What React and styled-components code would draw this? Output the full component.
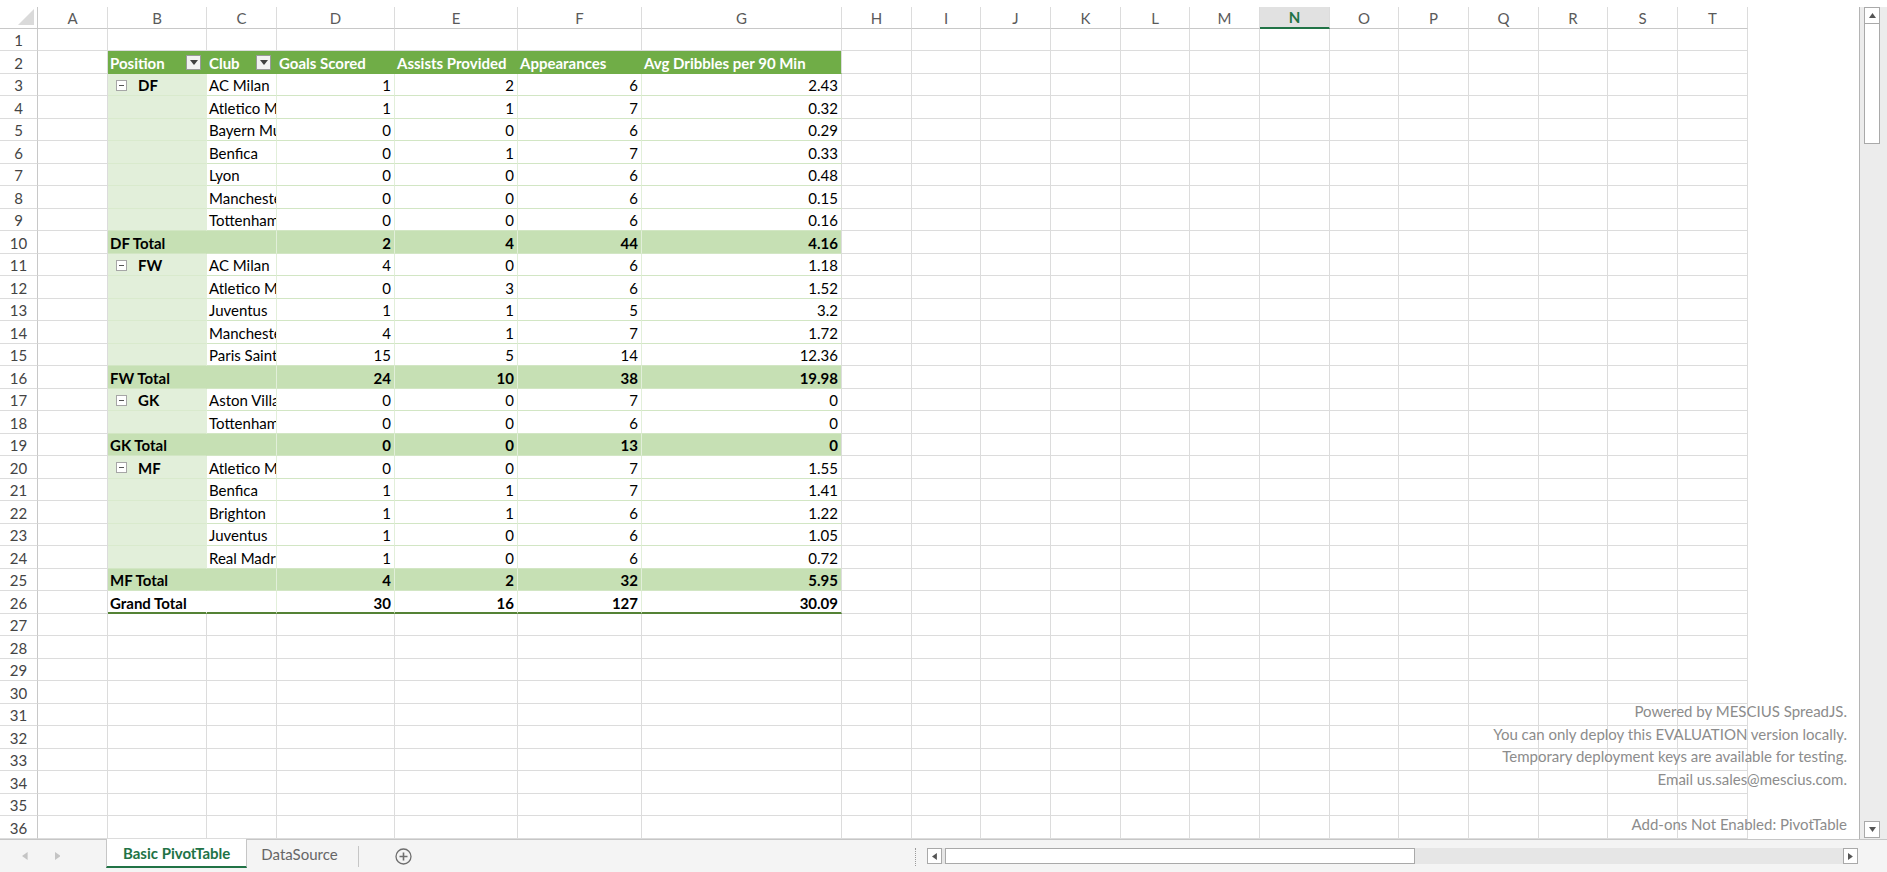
import React from 'react';
import styled, { createGlobalStyle, css } from 'styled-components';

const GlobalStyle = createGlobalStyle`
  html, body { margin: 0; padding: 0; background: #fff; }
  body { font-family: Lato, "Liberation Sans", sans-serif; }
  *, *::before, *::after { box-sizing: border-box; }
`;

const H_WIDTHS = [70, 69, 70, 70, 69, 70, 70, 69, 70, 70, 69, 70, 70];
const COLS = [38, 70, 99, 70, 118, 123, 124, 200, ...H_WIDTHS];
const TEMPLATE = COLS.map((w) => `${w}px`).join(' ') + ' 1fr';
const LETTERS = 'ABCDEFGHIJKLMNOPQRST'.split('');

const GRID = '#dcdcdc';
const HEAD_LINE = '#c8c8c8';
const PIVOT_H = '#d2e6c4';
const PIVOT_V = '#e2efda';

const groups = [
  {
    pos: 'DF',
    rows: [
      ['AC Milan', 1, 2, 6, '2.43'],
      ['Atletico Madrid', 1, 1, 7, '0.32'],
      ['Bayern Munich', 0, 0, 6, '0.29'],
      ['Benfica', 0, 1, 7, '0.33'],
      ['Lyon', 0, 0, 6, '0.48'],
      ['Manchester United', 0, 0, 6, '0.15'],
      ['Tottenham Hotspur', 0, 0, 6, '0.16'],
    ],
    total: [2, 4, 44, '4.16'],
  },
  {
    pos: 'FW',
    rows: [
      ['AC Milan', 4, 0, 6, '1.18'],
      ['Atletico Madrid', 0, 3, 6, '1.52'],
      ['Juventus', 1, 1, 5, '3.2'],
      ['Manchester City', 4, 1, 7, '1.72'],
      ['Paris Saint-Germain', 15, 5, 14, '12.36'],
    ],
    total: [24, 10, 38, '19.98'],
  },
  {
    pos: 'GK',
    rows: [
      ['Aston Villa', 0, 0, 7, '0'],
      ['Tottenham Hotspur', 0, 0, 6, '0'],
    ],
    total: [0, 0, 13, '0'],
  },
  {
    pos: 'MF',
    rows: [
      ['Atletico Madrid', 0, 0, 7, '1.55'],
      ['Benfica', 1, 1, 7, '1.41'],
      ['Brighton', 1, 1, 6, '1.22'],
      ['Juventus', 1, 0, 6, '1.05'],
      ['Real Madrid', 1, 0, 6, '0.72'],
    ],
    total: [4, 2, 32, '5.95'],
  },
];

function buildRows() {
  const rows = [{ type: 'empty' }, { type: 'head' }];
  groups.forEach((g) => {
    g.rows.forEach((r, i) => {
      rows.push({ type: 'data', label: i === 0 ? g.pos : '', last: i === g.rows.length - 1, club: r[0], values: r.slice(1) });
    });
    rows.push({ type: 'total', label: `${g.pos} Total`, values: g.total });
  });
  rows.push({ type: 'grand', label: 'Grand Total', values: [30, 16, 127, '30.09'] });
  while (rows.length < 36) rows.push({ type: 'empty' });
  return rows;
}

/* ---------- frame ---------- */
const Frame = styled.div`
  width: 1887px;
  height: 872px;
  display: flex;
  flex-direction: column;
  overflow: hidden;
  background: #fff;
`;
const TopGap = styled.div`
  height: 7px;
  flex: none;
`;
const Body = styled.div`
  display: flex;
  height: 832px;
  flex: none;
`;
const Viewport = styled.div`
  position: relative;
  flex: 1;
  border-right: 1px solid #b4b4b4;
  overflow: hidden;
`;

/* ---------- sheet rows ---------- */
const Row = styled.div`
  display: grid;
  grid-template-columns: ${TEMPLATE};
  height: ${(p) => p.$h}px;
  font-size: 15px;
  color: #000;
`;

const Cell = styled.div`
  display: flex;
  align-items: center;
  min-width: 0;
  overflow: hidden;
  white-space: nowrap;
  padding: 1px 3px 0 2px;
  border-right: 1px solid ${GRID};
  border-bottom: 1px solid ${GRID};
`;

const ColHead = styled(Cell)`
  justify-content: center;
  color: #5a5a5a;
  font-size: 15px;
  border-bottom: 1px solid ${HEAD_LINE};
  padding: 0;
  ${(p) =>
    p.$active &&
    css`
      background: #e1e1e1;
      color: #217346;
      font-weight: 700;
      border-bottom: 2px solid #217346;
    `}
`;

const Corner = styled(Cell)`
  position: relative;
  padding: 0;
  border-right: 1px solid ${HEAD_LINE};
  border-bottom: 1px solid ${HEAD_LINE};
  &::after {
    content: '';
    position: absolute;
    right: 3px;
    bottom: 3px;
    width: 0;
    height: 0;
    border-left: 16px solid transparent;
    border-bottom: 16px solid #dadada;
  }
`;

const RowNum = styled(Cell)`
  justify-content: center;
  color: #444;
  padding: 1px 0 0 0;
  border-right: 1px solid ${HEAD_LINE};
`;

const Fill = styled.div`
  background: #fff;
`;

const PivotHead = styled(Cell)`
  background: #70ad47;
  color: #fff;
  font-weight: 700;
  border-right: none;
  border-bottom: 1px solid #70ad47;
  justify-content: ${(p) => (p.$right ? 'flex-end' : 'flex-start')};
  ${(p) =>
    p.$last &&
    css`
      border-right: 1px solid ${GRID};
    `}
`;

const HeadLabel = styled.span`
  flex: 1;
  overflow: hidden;
`;

const FilterButton = styled.span`
  flex: none;
  width: 15px;
  height: 15px;
  margin-right: 3px;
  background: #f2f2f2;
  border: 1px solid #9a9a9a;
  display: flex;
  align-items: center;
  justify-content: center;
  &::after {
    content: '';
    border-left: 4px solid transparent;
    border-right: 4px solid transparent;
    border-top: 5px solid #404040;
  }
`;

const GroupCell = styled(Cell)`
  background: #e2efda;
  font-weight: 700;
  border-right: 1px solid #e2efda;
  border-bottom: 1px solid ${(p) => (p.$last ? PIVOT_H : '#d9eacd')};
  padding-left: 8px;
  gap: 11px;
`;

const Toggle = styled.span`
  flex: none;
  width: 11px;
  height: 11px;
  border: 1px solid #a6a6a6;
  background: #fff;
  display: flex;
  align-items: center;
  justify-content: center;
  &::after {
    content: '';
    width: 5px;
    height: 1px;
    background: #555;
  }
`;

const ClubCell = styled(Cell)`
  border-right: 1px solid ${PIVOT_V};
  border-bottom: 1px solid ${PIVOT_H};
`;

const ValueCell = styled(Cell)`
  justify-content: flex-end;
  border-right: 1px solid ${(p) => (p.$last ? GRID : PIVOT_V)};
  border-bottom: 1px solid ${PIVOT_H};
`;

const TotalCell = styled(Cell)`
  background: #c6e0b4;
  font-weight: 700;
  overflow: ${(p) => (p.$label ? 'visible' : 'hidden')};
  justify-content: ${(p) => (p.$right ? 'flex-end' : 'flex-start')};
  border-right: 1px solid ${(p) => (p.$last ? GRID : p.$label ? '#c6e0b4' : PIVOT_V)};
  border-bottom: 1px solid ${PIVOT_H};
`;

const GrandCell = styled(Cell)`
  background: #fff;
  font-weight: 700;
  overflow: ${(p) => (p.$label ? 'visible' : 'hidden')};
  justify-content: ${(p) => (p.$right ? 'flex-end' : 'flex-start')};
  border-right: 1px solid ${(p) => (p.$last ? GRID : p.$label ? '#fff' : PIVOT_V)};
  border-bottom: 2px solid #548235;
  padding-top: 2px;
`;

/* ---------- watermark ---------- */
const Watermark = styled.div`
  position: absolute;
  right: 12px;
  bottom: 4px;
  text-align: right;
  color: #8c8c8c;
  font-size: 15px;
  line-height: 22.5px;
  pointer-events: none;
`;
const WatermarkLine = styled.div`
  min-height: 22.5px;
`;

/* ---------- vertical scrollbar ---------- */
const VScroll = styled.div`
  width: 27px;
  flex: none;
  background: #ececec;
  display: flex;
  flex-direction: column;
  padding: 0 7px 1px 4px;
`;
const ScrollButton = styled.div`
  flex: none;
  width: ${(p) => p.$w || 16}px;
  height: ${(p) => p.$h || 17}px;
  background: #fff;
  border: 1px solid #a9a9a9;
  display: flex;
  align-items: center;
  justify-content: center;
  svg {
    display: block;
  }
`;
const VThumb = styled.div`
  flex: none;
  height: 120px;
  width: 16px;
  background: #fff;
  border: 1px solid #a9a9a9;
  border-top: none;
`;
const VTrack = styled.div`
  flex: 1;
`;

/* ---------- bottom bar ---------- */
const BottomBar = styled.div`
  flex: 1;
  display: flex;
  align-items: flex-start;
  background: #f4f4f4;
  border-top: 1px solid #c6c6c6;
`;
const TabNav = styled.div`
  width: 106px;
  height: 32px;
  flex: none;
  display: flex;
  align-items: center;
  padding-left: 22px;
  gap: 27px;
`;
const Tab = styled.div`
  flex: none;
  height: 29px;
  margin-top: -1px;
  padding: 0 ${(p) => (p.$active ? 16 : 14)}px;
  display: flex;
  align-items: center;
  font-size: 15px;
  ${(p) =>
    p.$active
      ? css`
          background: #fff;
          color: #217346;
          font-weight: 700;
          border-left: 1px solid #c6c6c6;
          border-right: 1px solid #c6c6c6;
          border-bottom: 2px solid #217346;
          padding-top: 1px;
        `
      : css`
          color: #666;
        `}
`;
const TabDivider = styled.div`
  flex: none;
  width: 1px;
  height: 21px;
  margin: 6px 0 0 6px;
  background: #c6c6c6;
`;
const AddSheet = styled.div`
  flex: none;
  width: 46px;
  height: 32px;
  display: flex;
  align-items: center;
  justify-content: center;
  margin-left: 22px;
`;
const Spacer = styled.div`
  flex: 1;
`;
const Splitter = styled.div`
  flex: none;
  width: 2px;
  height: 18px;
  margin-top: 8px;
  border-left: 1px dotted #9a9a9a;
`;
const HScroll = styled.div`
  flex: none;
  width: 931px;
  height: 16px;
  margin: 8px 29px 0 10px;
  background: #e6e6e6;
  display: flex;
  align-items: stretch;
`;
const HThumb = styled.div`
  flex: none;
  width: 470px;
  margin-left: 3px;
  background: #fff;
  border: 1px solid #a9a9a9;
`;

const Tri = ({ dir, color = '#555', size = 7 }) => {
  const s = size;
  const pts = {
    up: `0,${s * 0.7} ${s / 2},0 ${s},${s * 0.7}`,
    down: `0,0 ${s / 2},${s * 0.7} ${s},0`,
    left: `${s * 0.7},0 0,${s / 2} ${s * 0.7},${s}`,
    right: `0,0 ${s * 0.7},${s / 2} 0,${s}`,
  }[dir];
  const w = dir === 'up' || dir === 'down' ? s : s * 0.7;
  const h = dir === 'up' || dir === 'down' ? s * 0.7 : s;
  return (
    <svg width={w} height={h} viewBox={`0 0 ${w} ${h}`}>
      <polygon points={pts} fill={color} />
    </svg>
  );
};

function SheetRow({ row, index }) {
  const n = index + 1;
  const h = n % 2 === 1 ? 22 : 23;
  const A = <Cell />;
  const rest = H_WIDTHS.map((_, i) => <Cell key={`r${i}`} />);
  let pivot;
  if (row.type === 'empty') {
    pivot = [0, 1, 2, 3, 4, 5].map((i) => <Cell key={i} />);
  } else if (row.type === 'head') {
    pivot = [
      <PivotHead key="b">
        <HeadLabel>Position</HeadLabel>
        <FilterButton />
      </PivotHead>,
      <PivotHead key="c">
        <HeadLabel>Club</HeadLabel>
        <FilterButton />
      </PivotHead>,
      <PivotHead key="d">Goals Scored</PivotHead>,
      <PivotHead key="e">Assists Provided</PivotHead>,
      <PivotHead key="f">Appearances</PivotHead>,
      <PivotHead key="g" $last>
        Avg Dribbles per 90 Min
      </PivotHead>,
    ];
  } else if (row.type === 'data') {
    pivot = [
      <GroupCell key="b" $last={row.last}>
        {row.label && (
          <>
            <Toggle />
            <span>{row.label}</span>
          </>
        )}
      </GroupCell>,
      <ClubCell key="c">{row.club}</ClubCell>,
      ...row.values.map((v, i) => (
        <ValueCell key={i} $last={i === 3}>
          {v}
        </ValueCell>
      )),
    ];
  } else {
    const C = row.type === 'total' ? TotalCell : GrandCell;
    pivot = [
      <C key="b" $label>
        {row.label}
      </C>,
      <C key="c" />,
      ...row.values.map((v, i) => (
        <C key={i} $right $last={i === 3}>
          {v}
        </C>
      )),
    ];
  }
  return (
    <Row $h={h}>
      <RowNum>{n}</RowNum>
      {A}
      {pivot}
      {rest}
      <Fill />
    </Row>
  );
}

export default function App() {
  const rows = buildRows();
  return (
    <>
      <GlobalStyle />
      <Frame>
        <TopGap />
        <Body>
          <Viewport>
            <Row $h={22}>
              <Corner />
              {LETTERS.map((l) => (
                <ColHead key={l} $active={l === 'N'}>
                  {l}
                </ColHead>
              ))}
              <Fill />
            </Row>
            {rows.map((r, i) => (
              <SheetRow key={i} row={r} index={i} />
            ))}
            <Watermark>
              <WatermarkLine>Powered by MESCIUS SpreadJS.</WatermarkLine>
              <WatermarkLine>You can only deploy this EVALUATION version locally.</WatermarkLine>
              <WatermarkLine>Temporary deployment keys are available for testing.</WatermarkLine>
              <WatermarkLine>Email us.sales@mescius.com.</WatermarkLine>
              <WatermarkLine />
              <WatermarkLine>Add-ons Not Enabled: PivotTable</WatermarkLine>
            </Watermark>
          </Viewport>
          <VScroll>
            <ScrollButton>
              <Tri dir="up" color="#555" size={7} />
            </ScrollButton>
            <VThumb />
            <VTrack />
            <ScrollButton>
              <Tri dir="down" color="#555" size={7} />
            </ScrollButton>
          </VScroll>
        </Body>
        <BottomBar>
          <TabNav>
            <Tri dir="left" color="#c4c4c4" size={8} />
            <Tri dir="right" color="#c4c4c4" size={8} />
          </TabNav>
          <Tab $active>Basic PivotTable</Tab>
          <Tab>DataSource</Tab>
          <TabDivider />
          <AddSheet>
            <svg width="17" height="17" viewBox="0 0 17 17">
              <circle cx="8.5" cy="8.5" r="7.5" fill="none" stroke="#6e6e6e" strokeWidth="1.3" />
              <path d="M8.5 4.5v8M4.5 8.5h8" stroke="#6e6e6e" strokeWidth="1.6" />
            </svg>
          </AddSheet>
          <Spacer />
          <Splitter />
          <HScroll>
            <ScrollButton $w={15} $h={16}>
              <Tri dir="left" color="#555" size={7} />
            </ScrollButton>
            <HThumb />
            <Spacer />
            <ScrollButton $w={15} $h={16}>
              <Tri dir="right" color="#555" size={7} />
            </ScrollButton>
          </HScroll>
        </BottomBar>
      </Frame>
    </>
  );
}
